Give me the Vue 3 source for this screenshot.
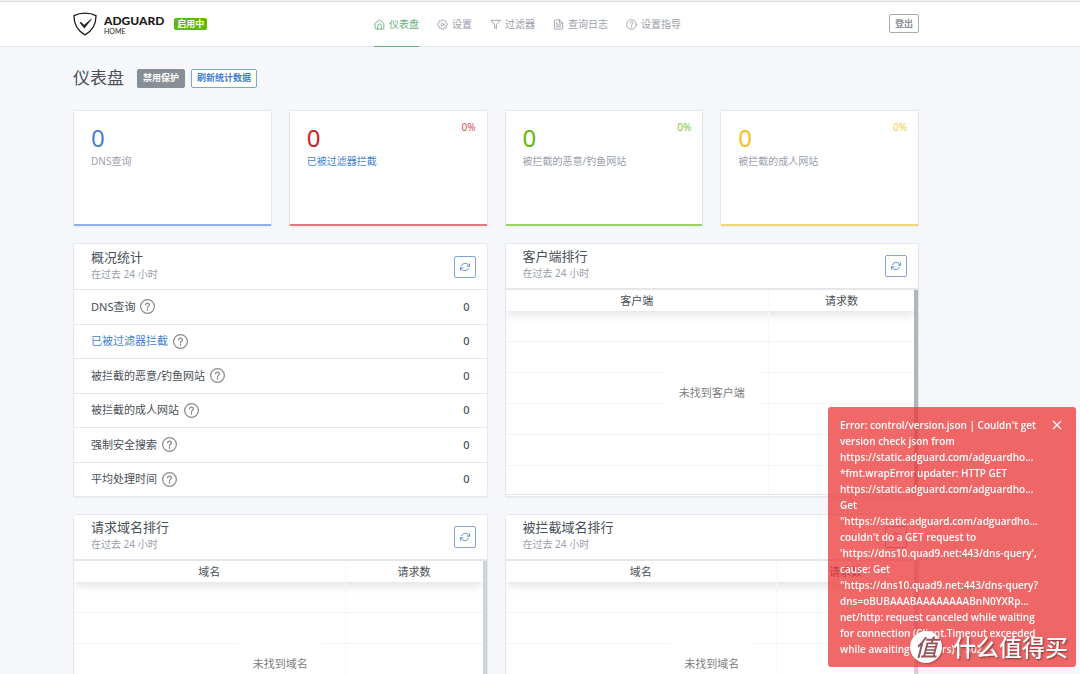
<script setup>
const navItems = [
  { label: '仪表盘', icon: 'home', active: true },
  { label: '设置', icon: 'settings' },
  { label: '过滤器', icon: 'filter' },
  { label: '查询日志', icon: 'log' },
  { label: '设置指导', icon: 'help' },
]

const counters = [
  { label: 'DNS查询', tone: 'blue' },
  { label: '已被过滤器拦截', tone: 'red', percent: '0%', link: true },
  { label: '被拦截的恶意/钓鱼网站', tone: 'green', percent: '0%' },
  { label: '被拦截的成人网站', tone: 'yellow', percent: '0%' },
]

const summary = [
  { label: 'DNS查询' },
  { label: '已被过滤器拦截', link: true },
  { label: '被拦截的恶意/钓鱼网站' },
  { label: '被拦截的成人网站' },
  { label: '强制安全搜索' },
  { label: '平均处理时间' },
]

const tables = [
  { title: '客户端排行', column: '客户端', empty: '未找到客户端', kind: 'clients' },
  { title: '请求域名排行', column: '域名', empty: '未找到域名', kind: 'domains' },
  { title: '被拦截域名排行', column: '域名', empty: '未找到域名', kind: 'domains' },
]

const errorLines = [
  "Error: control/version.json | Couldn't get",
  'version check json from',
  'https://static.adguard.com/adguardho…',
  '*fmt.wrapError updater: HTTP GET',
  'https://static.adguard.com/adguardho…',
  'Get',
  '"https://static.adguard.com/adguardho…',
  "couldn't do a GET request to",
  "'https://dns10.quad9.net:443/dns-query',",
  'cause: Get',
  '"https://dns10.quad9.net:443/dns-query?',
  'dns=oBUBAAABAAAAAAAABnN0YXRp…',
  'net/http: request canceled while waiting',
  'for connection (Client.Timeout exceeded',
  'while awaiting headers) | 502',
]
</script>

<template>
  <div class="page">
    <header class="header">
      <div class="container header-row">
        <div class="brand">
          <a class="logo" href="#" aria-label="AdGuard Home">
            <svg class="shield" viewBox="0 0 24 24" aria-hidden="true">
              <path d="M12 1.2C8.5 1.2 4.300 2 1 3.700C1 7.400.6 16.500 12 22.900C23.400 16.500 23 7.400 23 3.700C19.700 2 15.500 1.200 12 1.200Z" fill="none" stroke="#1b1b1b" stroke-width="1.300" />
              <path d="M6.500 10.400Q7.800 9.600 8.700 10.500L11.100 13L17.700 7.300Q18.400 6.900 18.900 7.100L11.300 16.500Z" fill="#1b1b1b" />
            </svg>
            <span class="wordmark"><b>ADGUARD</b><small>HOME</small></span>
          </a>
          <span class="status">启用中</span>
        </div>
        <nav class="nav">
          <a v-for="item in navItems" :key="item.label" href="#" :class="{ active: item.active }">
            <svg class="nav-icon" viewBox="0 0 24 24" aria-hidden="true">
              <template v-if="item.icon === 'home'">
                <path d="M2.500 9.500 12 2l9.500 7.500V20a2 2 0 0 1-2 2h-15a2 2 0 0 1-2-2z" />
                <path d="M8 22v-7a4 4 0 0 1 8 0v7" />
              </template>
              <template v-else-if="item.icon === 'settings'">
                <circle cx="12" cy="12" r="3" />
                <path d="M19.4 15a1.65 1.65 0 0 0 .33 1.82l.06.06a2 2 0 0 1 0 2.83 2 2 0 0 1-2.83 0l-.06-.06a1.65 1.65 0 0 0-1.82-.33 1.65 1.65 0 0 0-1 1.51V21a2 2 0 0 1-2 2 2 2 0 0 1-2-2v-.09A1.65 1.65 0 0 0 9 19.4a1.65 1.65 0 0 0-1.82.33l-.06.06a2 2 0 0 1-2.83 0 2 2 0 0 1 0-2.83l.06-.06a1.65 1.65 0 0 0 .33-1.82 1.65 1.65 0 0 0-1.51-1H3a2 2 0 0 1-2-2 2 2 0 0 1 2-2h.09A1.65 1.65 0 0 0 4.6 9a1.65 1.65 0 0 0-.33-1.82l-.06-.06a2 2 0 0 1 0-2.83 2 2 0 0 1 2.83 0l.06.06a1.65 1.65 0 0 0 1.82.33H9a1.65 1.65 0 0 0 1-1.51V3a2 2 0 0 1 2-2 2 2 0 0 1 2 2v.09a1.65 1.65 0 0 0 1 1.51 1.65 1.65 0 0 0 1.82-.33l.06-.06a2 2 0 0 1 2.83 0 2 2 0 0 1 0 2.83l-.06.06a1.65 1.65 0 0 0-.33 1.82V9a1.65 1.65 0 0 0 1.51 1H21a2 2 0 0 1 2 2 2 2 0 0 1-2 2h-.09a1.65 1.65 0 0 0-1.51 1z" />
              </template>
              <path v-else-if="item.icon === 'filter'" d="M22 3H2l8 9.460V19l4 2v-8.540z" />
              <template v-else-if="item.icon === 'log'">
                <path d="M14 2H5a2 2 0 0 0-2 2v16a2 2 0 0 0 2 2h14a2 2 0 0 0 2-2V9z" />
                <path d="M14 2v7h7M7 13h10M7 17h10M7 9h3" />
              </template>
              <template v-else>
                <circle cx="12" cy="12" r="10.500" />
                <path d="M9 9a3 3 0 0 1 6 0c0 2-3 2.500-3 5M12 17v1" />
              </template>
            </svg>
            <span>{{ item.label }}</span>
          </a>
        </nav>
        <button class="btn btn-gray-outline" type="button">登出</button>
      </div>
    </header>

    <main class="container main">
      <div class="title-row">
        <h1>仪表盘</h1>
        <button class="btn btn-gray" type="button">禁用保护</button>
        <button class="btn btn-blue-outline" type="button">刷新统计数据</button>
      </div>

      <section class="counters">
        <article v-for="c in counters" :key="c.label" class="card counter" :class="c.tone">
          <div class="counter-value">0</div>
          <a v-if="c.link" class="counter-label" href="#">{{ c.label }}</a>
          <div v-else class="counter-label">{{ c.label }}</div>
          <span v-if="c.percent" class="percent">{{ c.percent }}</span>
        </article>
      </section>

      <section class="panels">
        <article class="card panel">
          <div class="panel-head">
            <div>
              <h2>概况统计</h2>
              <p>在过去 24 小时</p>
            </div>
            <button class="refresh" type="button" aria-label="刷新">
              <svg viewBox="0 0 24 24" aria-hidden="true">
                <path d="M23 4v6h-6M1 20v-6h6M3.500 9a9 9 0 0 1 14.900-3.400L23 10M1 14l4.600 4.400A9 9 0 0 0 20.500 15" />
              </svg>
            </button>
          </div>
          <table class="summary">
            <tbody>
              <tr v-for="row in summary" :key="row.label">
                <th scope="row">
                  <span class="summary-label">
                    <a v-if="row.link" href="#">{{ row.label }}</a>
                    <span v-else>{{ row.label }}</span>
                    <svg class="hint" viewBox="0 0 24 24" aria-hidden="true">
                      <circle cx="12" cy="12" r="11" />
                      <path d="M9 9.500a3 3 0 0 1 6 0c0 2-3 2.200-3 4.300M12 16v1.800" />
                    </svg>
                  </span>
                </th>
                <td>0</td>
              </tr>
            </tbody>
          </table>
        </article>

        <article v-for="t in tables" :key="t.title" class="card panel">
          <div class="panel-head ranked">
            <div>
              <h2>{{ t.title }}</h2>
              <p>在过去 24 小时</p>
            </div>
            <button class="refresh" type="button" aria-label="刷新">
              <svg viewBox="0 0 24 24" aria-hidden="true">
                <path d="M23 4v6h-6M1 20v-6h6M3.500 9a9 9 0 0 1 14.900-3.400L23 10M1 14l4.600 4.400A9 9 0 0 0 20.500 15" />
              </svg>
            </button>
          </div>
          <div class="table-wrap" :class="t.kind">
            <table class="ranking">
              <thead>
                <tr>
                  <th scope="col" class="name-col">{{ t.column }}</th>
                  <th scope="col">请求数</th>
                </tr>
              </thead>
              <tbody>
                <tr v-for="n in 6" :key="n"><td></td><td></td></tr>
              </tbody>
            </table>
            <div class="track"></div>
            <div class="empty">{{ t.empty }}</div>
          </div>
        </article>
      </section>
    </main>

    <aside class="toast" role="alert">
      <p><span v-for="(line, i) in errorLines" :key="i">{{ line }}</span></p>
      <button type="button" aria-label="关闭">
        <svg viewBox="0 0 10 10" aria-hidden="true"><path d="M1 1l8 8M9 1l-8 8" /></svg>
      </button>
    </aside>

    <div class="watermark">
      <span class="seal">值</span>
      <span>什么值得买</span>
    </div>
  </div>
</template>

<style>
body {
  margin: 0;
  background: #f5f7fb;
}
</style>

<style scoped>
.page {
  height: 100vh;
  overflow: hidden;
  background: #f5f7fb;
  color: #495057;
  font-family: "Noto Sans", "Noto Sans CJK SC", sans-serif;
  font-size: 11px;
  line-height: 16px;
}
.page * { box-sizing: border-box; }
a { color: #467fcf; text-decoration: none; }
button { font-family: inherit; cursor: pointer; }
.container { padding: 0 161px 0 73px; }

.header {
  background: #fff;
  border-top: 1px solid #f2f2f2;
  border-bottom: 1px solid #dfe5ee;
  box-shadow: inset 0 1px #dcdcdc;
}
.header-row { display: flex; align-items: center; height: 45px; }
.brand { display: flex; align-items: center; gap: 10px; flex: 0 0 301px; }
.logo { display: flex; align-items: center; gap: 7px; color: #1b1b1b; }
.shield { width: 24px; height: 24px; }
.wordmark { display: flex; flex-direction: column; padding-top: 2px; font-family: Lato, sans-serif; }
.wordmark b { font-size: 12px; font-weight: 900; line-height: 12px; }
.wordmark small { font-size: 7px; line-height: 8px; }
.status {
  padding: 0 3px;
  border-radius: 2px;
  background: #5eba00;
  color: #fff;
  font-size: 9px;
  font-weight: 700;
  line-height: 12px;
}
.nav { display: flex; gap: 18px; flex: 1; align-self: stretch; }
.nav a {
  display: flex;
  align-items: center;
  gap: 4px;
  margin-bottom: -1px;
  padding-top: 1px;
  border-bottom: 1px solid transparent;
  color: #9aa0ac;
  font-size: 10px;
  white-space: nowrap;
}
.nav a.active { color: #67b279; border-color: #67b279; }
.nav-icon { width: 11px; height: 11px; fill: none; stroke: currentColor; stroke-width: 2; stroke-linejoin: round; stroke-linecap: round; }

.btn {
  height: 19px;
  padding: 0 5px;
  border: 1px solid;
  border-radius: 2px;
  font-size: 9px;
  font-weight: 700;
  line-height: 16px;
  white-space: nowrap;
}
.btn-gray { background: #868e96; border-color: #868e96; color: #fff; }
.btn-gray-outline { background: #fff; border-color: #a4aab0; color: #868e96; }
.btn-blue-outline { background: #fff; border-color: #7ea5dd; color: #467fcf; }

.main { padding-top: 20px; }
.title-row { display: flex; align-items: center; height: 22px; margin-bottom: 21px; gap: 6px; }
h1 { margin: 0 7px 0 0; font-size: 17px; font-weight: 400; line-height: 22px; }

.card {
  position: relative;
  background: #fff;
  border: 1px solid #e4e8ef;
  border-radius: 2px;
  box-shadow: 0 1px 2px rgba(0, 0, 0, 0.05);
}
.counters { display: grid; grid-template-columns: repeat(4, 1fr); gap: 17px; margin-bottom: 17px; }
.counter { min-height: 116px; padding: 15px 17px; border-bottom-width: 2px; }
.counter-value { font-size: 24px; line-height: 24px; }
.counter-label { display: block; margin-top: 3px; color: #9aa0ac; font-size: 10px; }
a.counter-label { color: #467fcf; }
.percent { position: absolute; top: 8px; right: 11px; font-size: 10px; opacity: 0.8; }
.blue { border-bottom-color: #8fb0e0; }
.blue .counter-value { color: #467fcf; }
.red { border-bottom-color: #df7b7b; }
.red .counter-value, .red .percent { color: #cd201f; }
.green { border-bottom-color: #9bd266; }
.green .counter-value, .green .percent { color: #5eba00; }
.yellow { border-bottom-color: #f2d67a; }
.yellow .counter-value, .yellow .percent { color: #f4bf20; }

.panels { display: grid; grid-template-columns: repeat(2, 1fr); gap: 17px; }
.panel { min-height: 253px; }
.panel-head { display: flex; align-items: center; justify-content: space-between; height: 45px; padding: 0 11px 0 17px; }
.panel-head.ranked { height: 44px; }
h2 { margin: 0; font-size: 13px; font-weight: 400; line-height: 18px; }
.panel-head p { margin: 0; color: #9aa0ac; font-size: 10px; line-height: 17px; }
.panel-head > div { padding-bottom: 3px; }
.refresh { display: grid; place-items: center; width: 22px; height: 22px; padding: 0; background: #fff; border: 1px solid #7ea5dd; border-radius: 2px; }
.refresh svg { width: 10px; height: 10px; fill: none; stroke: #467fcf; stroke-width: 2; stroke-linecap: round; stroke-linejoin: round; }

table { width: 100%; border-spacing: 0; }
.summary { height: 207px; }
.summary th, .summary td { padding: 0 17px; border-top: 1px solid #e4e8ef; text-align: left; font-weight: 400; }
.summary td { text-align: right; font-weight: 500; }
.summary-label { display: flex; align-items: center; gap: 5px; }
.hint { width: 15px; height: 15px; fill: none; stroke: #8b8b8b; stroke-width: 2; stroke-linecap: round; }

.table-wrap { position: relative; display: flex; height: 207px; overflow: hidden; border-top: 2px solid #e4e6e9; border-bottom: 1px solid #e4e6e9; }
.ranking { flex: 1; table-layout: fixed; }
.ranking thead { box-shadow: 0 2px 12px rgba(0, 0, 0, 0.15); }
.ranking th { height: 21px; padding: 0; font-weight: 400; }
.ranking td { height: 31px; padding: 0; border-bottom: 1px solid #f4f4f4; }
.ranking tr > :first-child { border-right: 1px solid #f7f7f7; }
.clients .name-col { width: 64.5%; }
.domains .name-col { width: 66.5%; }
.track { width: 4px; background: #ced4da; }
.clients .track { background: #adb5bd; }
.empty { position: absolute; top: 82px; left: 50%; padding: 13px 14px; transform: translateX(-50%); background: #fff; color: #808080; white-space: nowrap; }

.toast {
  position: fixed;
  right: 4px;
  bottom: 7px;
  display: flex;
  justify-content: space-between;
  width: 248px;
  padding: 10px 12px;
  border-radius: 3px;
  background: rgba(236, 53, 53, 0.75);
  color: #fff;
  font-family: "Open Sans", "Noto Sans", sans-serif;
  font-size: 10px;
  font-weight: 600;
}
.toast p { margin: 0; }
.toast span { display: block; white-space: nowrap; }
.toast button { display: grid; place-items: center; width: 14px; height: 16px; padding: 0; background: none; border: 0; }
.toast svg { width: 10px; height: 10px; stroke: #fff; stroke-width: 1.200; }

.watermark {
  position: fixed;
  right: 12px;
  bottom: 11px;
  display: flex;
  align-items: center;
  gap: 11px;
  color: #fff;
  font-size: 23px;
  line-height: 32px;
  font-weight: 500;
  text-shadow: 1px 1px 2px rgba(0, 0, 0, 0.5);
}
.seal {
  width: 32px;
  height: 32px;
  border-radius: 50%;
  background: #fff;
  color: #94565a;
  font-weight: 500;
  font-style: italic;
  text-align: center;
  text-shadow: none;
  box-shadow: 1px 1px 2px rgba(0, 0, 0, 0.3);
}
</style>
